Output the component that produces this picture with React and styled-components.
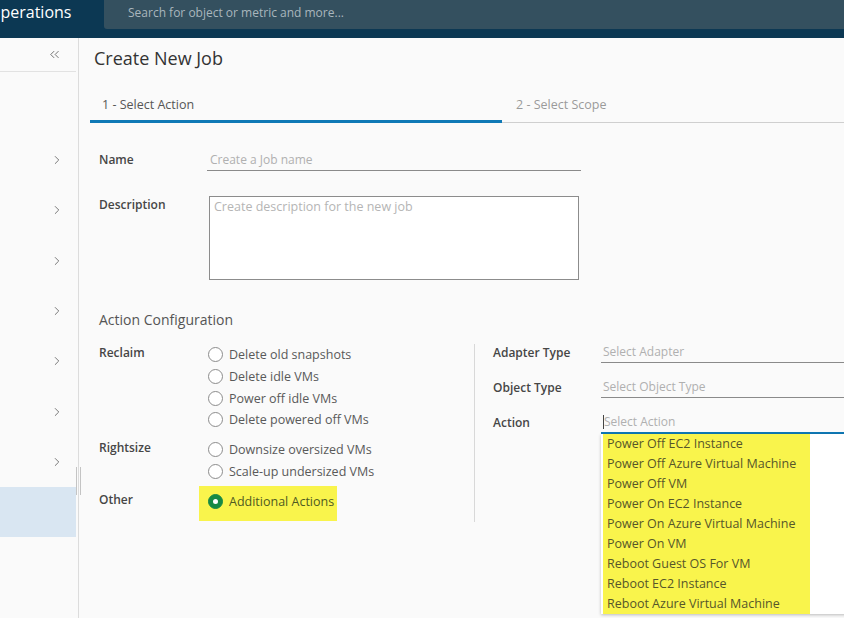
import React from "react";
import styled, { createGlobalStyle } from "styled-components";
import { ChevronRight, ChevronsLeft } from "lucide-react";

const Global = createGlobalStyle`
  html, body { margin: 0; padding: 0; }
  body {
    font-family: "Open Sans", "Liberation Sans", sans-serif;
    background: #fafafa;
    overflow: hidden;
  }
  * { box-sizing: border-box; }
`;

const Page = styled.div`
  width: 844px;
  height: 618px;
  display: flex;
  flex-direction: column;
  overflow: hidden;
`;

const Header = styled.header`
  height: 38px;
  flex: none;
  display: flex;
  background: #0c3853;
  overflow: hidden;
`;

const Brand = styled.div`
  width: 104px;
  flex: none;
  height: 29px;
  padding-bottom: 5px;
  display: flex;
  align-items: center;
  overflow: hidden;
  color: #fff;
  font-size: 16px;
  font-weight: 500;
  white-space: nowrap;
  span { margin-left: -12px; }
`;

const Search = styled.div`
  flex: 1;
  height: 29px;
  background: #34505f;
  border-bottom-left-radius: 3px;
  display: flex;
  align-items: center;
  padding: 0 0 4px 24px;
  color: #a9b6bd;
  font-size: 12px;
`;

const Body = styled.div`
  flex: 1;
  display: flex;
  min-height: 0;
`;

const Sidebar = styled.nav`
  width: 79px;
  flex: none;
  position: relative;
  border-right: 1px solid #dcdcdc;
  background: #fafafa;
  padding-right: 2px;
`;

const SideTop = styled.div`
  height: 34px;
  border-bottom: 1px solid #e2e2e2;
  display: flex;
  align-items: center;
  justify-content: flex-end;
  padding: 0 14px 0 0;
  color: #555;
`;

const NavList = styled.div`
  padding-top: 63px;
  display: flex;
  flex-direction: column;
`;

const NavItem = styled.div`
  height: 50.3px;
  display: flex;
  align-items: center;
  justify-content: flex-end;
  padding-right: 12px;
  color: #666;
  background: ${(p) => (p.$active ? "#d9e6f2" : "transparent")};
`;

const Grip = styled.div`
  position: absolute;
  right: -3px;
  top: 429px;
  width: 5px;
  height: 28px;
  border-left: 1px solid #c4c4c4;
  border-right: 1px solid #c4c4c4;
`;

const Main = styled.main`
  flex: 1;
  padding: 8px 0 0 11px;
  min-width: 0;
`;

const Title = styled.h1`
  margin: 0;
  padding-left: 4px;
  font-size: 18px;
  font-weight: 400;
  color: #333;
  line-height: 24px;
`;

const Tabs = styled.div`
  display: flex;
  margin-top: 21px;
  border-bottom: 1px solid #cfcfcf;
`;

const Tab = styled.div`
  width: ${(p) => p.$w}px;
  padding: 0 0 0 ${(p) => (p.$active ? 12 : 14)}px;
  height: 32px;
  line-height: 27px;
  font-size: 12.5px;
  color: ${(p) => (p.$active ? "#565656" : "#9a9a9a")};
  border-bottom: 3px solid ${(p) => (p.$active ? "#0f79b6" : "transparent")};
  margin-bottom: -1px;
  flex: ${(p) => (p.$active ? "none" : "1")};
`;

const Form = styled.div`
  padding: 26px 0 0 9px;
`;

const FieldRow = styled.div`
  display: flex;
  align-items: ${(p) => (p.$top ? "flex-start" : "center")};
  margin-top: ${(p) => p.$mt || 0}px;
`;

const Label = styled.div`
  width: 108px;
  flex: none;
  font-size: 12px;
  font-weight: 600;
  color: #464646;
  line-height: 16px;
`;

const LineInput = styled.div`
  width: ${(p) => p.$w}px;
  height: 22px;
  line-height: 21px;
  padding-left: 3px;
  font-size: 12px;
  color: #b0b0b0;
  border-bottom: ${(p) => (p.$focus ? "2px solid #0f79b6" : "1px solid #8a8a8a")};
  white-space: nowrap;
  overflow: hidden;
`;

const Caret = styled.span`
  display: inline-block;
  width: 1px;
  height: 14px;
  background: #444;
  vertical-align: -3px;
`;

const TextArea = styled.div`
  margin-left: 2px;
  width: 370px;
  height: 84px;
  margin-top: -1px;
  background: #fff;
  border: 1px solid #8c8c8c;
  padding: 1px 4px;
  font-size: 12.5px;
  color: #b5b5b5;
  line-height: 18px;
`;

const SectionTitle = styled.h2`
  margin: 30px 0 0 0;
  font-size: 14px;
  font-weight: 400;
  color: #555;
  line-height: 20px;
`;

const Config = styled.div`
  display: flex;
  margin-top: 14px;
`;

const LeftCol = styled.div`
  width: 376px;
  flex: none;
  border-right: 1px solid #d8d8d8;
  padding-bottom: 1px;
`;

const Group = styled.div`
  display: flex;
  align-items: baseline;
  margin-top: ${(p) => p.$mt || 0}px;
`;

const GroupLabel = styled.div`
  width: 100px;
  flex: none;
  font-size: 12px;
  font-weight: 600;
  color: #464646;
`;

const Options = styled.div`
  display: flex;
  flex-direction: column;
  align-items: flex-start;
`;

const Option = styled.div`
  display: flex;
  align-items: center;
  gap: 6px;
  height: ${(p) => (p.$hl ? "35px" : "21.7px")};
  padding: ${(p) => (p.$hl ? "0 3px 5px 9px" : "0 9px")};
  background: ${(p) => (p.$hl ? "#f9f44c" : "transparent")};
  font-size: 12.5px;
  color: ${(p) => (p.$hl ? "#4f5a22" : "#595959")};
  white-space: nowrap;
`;

const Radio = styled.span`
  width: 15px;
  height: 15px;
  flex: none;
  border-radius: 50%;
  background: ${(p) => (p.$on ? "#168a45" : "#fff")};
  border: 1px solid ${(p) => (p.$on ? "#168a45" : "#8c8c8c")};
  display: flex;
  align-items: center;
  justify-content: center;
  &::after {
    content: "";
    width: 5px;
    height: 5px;
    border-radius: 50%;
    background: ${(p) => (p.$on ? "#fff" : "transparent")};
  }
`;

const RightCol = styled.div`
  flex: 1;
  margin-top: -2px;
  padding-left: 18px;
  display: flex;
  flex-direction: column;
  gap: 14px;
`;

const RField = styled.div`
  position: relative;
  display: flex;
  align-items: center;
`;

const RInput = styled(LineInput)`
  flex: 1;
  width: auto;
  height: ${(p) => (p.$focus ? 22 : 21)}px;
  line-height: 20px;
  padding-left: 2px;
`;

const Dropdown = styled.div`
  position: absolute;
  top: 100%;
  left: 108px;
  width: 260px;
  background: #fff;
  padding-left: 2px;
  box-shadow: 0 1px 3px rgba(0, 0, 0, 0.25);
  z-index: 2;
`;

const DropList = styled.div`
  width: 207px;
  background: #f9f44c;
`;

const DropItem = styled.div`
  height: 20px;
  line-height: 20px;
  padding-left: 4px;
  font-size: 12.5px;
  color: #56562a;
  white-space: nowrap;
`;

const navItems = [0, 1, 2, 3, 4, 5, 6, 7];
const reclaim = [
  "Delete old snapshots",
  "Delete idle VMs",
  "Power off idle VMs",
  "Delete powered off VMs",
];
const rightsize = ["Downsize oversized VMs", "Scale-up undersized VMs"];
const actions = [
  "Power Off EC2 Instance",
  "Power Off Azure Virtual Machine",
  "Power Off VM",
  "Power On EC2 Instance",
  "Power On Azure Virtual Machine",
  "Power On VM",
  "Reboot Guest OS For VM",
  "Reboot EC2 Instance",
  "Reboot Azure Virtual Machine",
];

export default function App() {
  return (
    <Page>
      <Global />
      <Header>
        <Brand>
          <span>Operations</span>
        </Brand>
        <Search>Search for object or metric and more...</Search>
      </Header>
      <Body>
        <Sidebar>
          <SideTop>
            <ChevronsLeft size={15} strokeWidth={1.3} />
          </SideTop>
          <NavList>
            {navItems.map((i) => (
              <NavItem key={i} $active={i === 7}>
                {i !== 7 && <ChevronRight size={14} strokeWidth={1.5} />}
              </NavItem>
            ))}
          </NavList>
          <Grip />
        </Sidebar>
        <Main>
          <Title>Create New Job</Title>
          <Tabs>
            <Tab $active $w={412}>1 - Select Action</Tab>
            <Tab>2 - Select Scope</Tab>
          </Tabs>
          <Form>
            <FieldRow>
              <Label>Name</Label>
              <LineInput $w={374}>Create a Job name</LineInput>
            </FieldRow>
            <FieldRow $top $mt={26}>
              <Label>Description</Label>
              <TextArea>Create description for the new job</TextArea>
            </FieldRow>
            <SectionTitle>Action Configuration</SectionTitle>
            <Config>
              <LeftCol>
                <Group>
                  <GroupLabel>Reclaim</GroupLabel>
                  <Options>
                    {reclaim.map((o) => (
                      <Option key={o}>
                        <Radio />
                        {o}
                      </Option>
                    ))}
                  </Options>
                </Group>
                <Group $mt={8}>
                  <GroupLabel>Rightsize</GroupLabel>
                  <Options>
                    {rightsize.map((o) => (
                      <Option key={o}>
                        <Radio />
                        {o}
                      </Option>
                    ))}
                  </Options>
                </Group>
                <Group $mt={4}>
                  <GroupLabel>Other</GroupLabel>
                  <Options>
                    <Option $hl>
                      <Radio $on />
                      Additional Actions
                    </Option>
                  </Options>
                </Group>
              </LeftCol>
              <RightCol>
                <RField>
                  <Label>Adapter Type</Label>
                  <RInput>Select Adapter</RInput>
                </RField>
                <RField>
                  <Label>Object Type</Label>
                  <RInput>Select Object Type</RInput>
                </RField>
                <RField>
                  <Label>Action</Label>
                  <RInput $focus>
                    <Caret />
                    Select Action
                  </RInput>
                  <Dropdown>
                    <DropList>
                      {actions.map((a) => (
                        <DropItem key={a}>{a}</DropItem>
                      ))}
                    </DropList>
                  </Dropdown>
                </RField>
              </RightCol>
            </Config>
          </Form>
        </Main>
      </Body>
    </Page>
  );
}
